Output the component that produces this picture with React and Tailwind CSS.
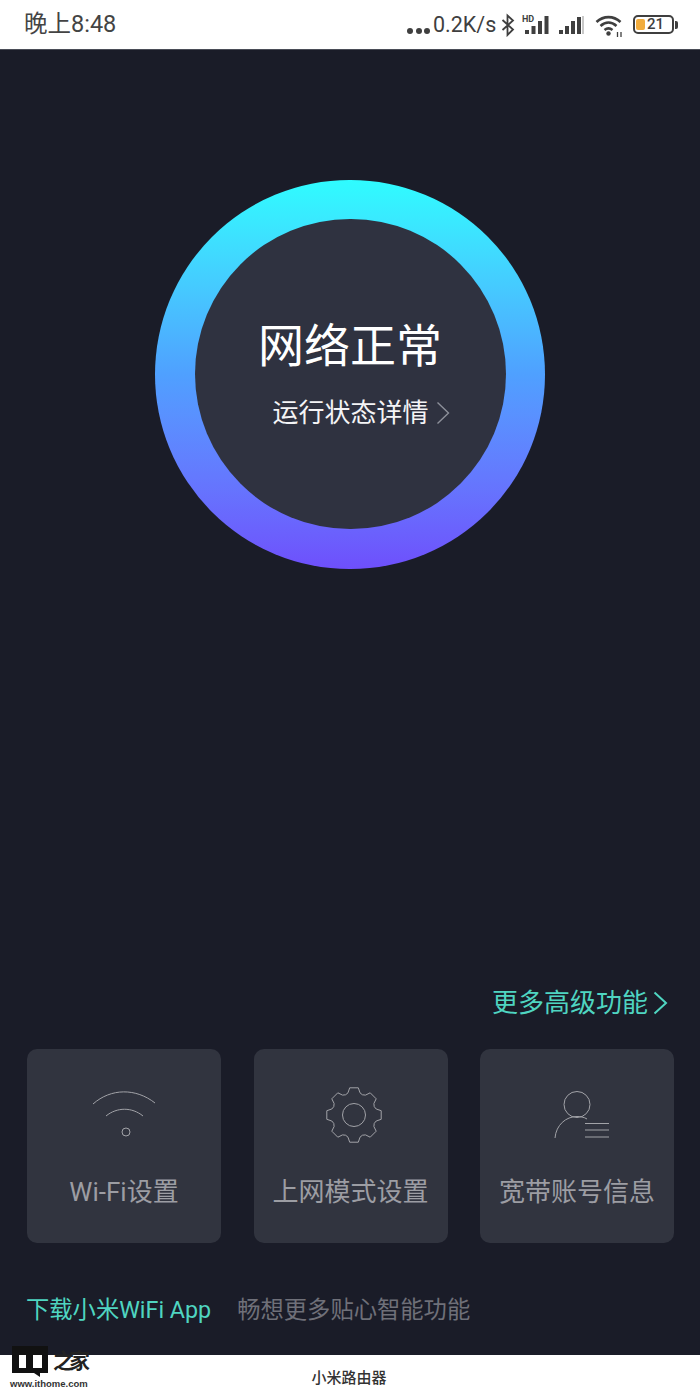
import React from 'react';

const CJK = 'font-["Roboto","Noto_Sans_CJK_SC",sans-serif]';

const StatusIcons = () => (
  <div className="flex items-center text-[#3f3f3f]">
    <span className="flex items-center justify-between w-[23px] mr-[3px] mt-[12px]">
      <i className="w-[6px] h-[6px] rounded-full bg-[#3f3f3f]" />
      <i className="w-[6px] h-[6px] rounded-full bg-[#3f3f3f]" />
      <i className="w-[6px] h-[6px] rounded-full bg-[#3f3f3f]" />
    </span>
    <span className="w-[63px] text-[21.5px] leading-none">0.2K/s</span>
    {/* bluetooth */}
    <svg width="14" height="24" viewBox="0 0 14 24" className="ml-[5px]" fill="none" stroke="#3f3f3f" strokeWidth="1.8">
      <path d="M1.5 7 L12 16.5 L6.5 22 V2.5 L12 7.5 L1.5 17" />
    </svg>
    {/* HD signal */}
    <svg width="28" height="24" viewBox="0 0 28 24" className="ml-[7px]">
      <text x="0" y="8.5" fontSize="9" fontWeight="700" fill="#3f3f3f" fontFamily="Roboto, sans-serif">HD</text>
      <rect x="3" y="17" width="4" height="4" fill="#3f3f3f" />
      <rect x="9.5" y="13" width="4" height="8" fill="#3f3f3f" />
      <rect x="16" y="8" width="4" height="13" fill="#3f3f3f" />
      <rect x="22.5" y="3" width="4" height="18" fill="#3f3f3f" />
    </svg>
    {/* second signal */}
    <svg width="26" height="24" viewBox="0 0 26 24" className="ml-[9px]">
      <rect x="0" y="17" width="4" height="4" fill="#3f3f3f" />
      <rect x="6" y="13" width="4" height="8" fill="#3f3f3f" />
      <rect x="12" y="8" width="4" height="13" fill="#3f3f3f" />
      <rect x="18" y="4" width="4" height="17" fill="#3f3f3f" />
      <rect x="23" y="3" width="2" height="18" fill="#c8c8c8" />
    </svg>
    {/* wifi */}
    <svg width="30" height="24" viewBox="0 0 30 24" className="ml-[10px]" fill="none" stroke="#3f3f3f" strokeWidth="2.6">
      <path d="M1.5 9 C8.5 2.5 18.5 2.5 25.5 9" />
      <path d="M5.5 13 C10.5 8.5 16.5 8.5 21.5 13" />
      <path d="M9.5 17 C12 15 15 15 17.5 17" />
      <circle cx="13.5" cy="20.5" r="2.2" fill="#3f3f3f" stroke="none" />
      <path d="M22.5 19 V24 M26 19 V24" strokeWidth="1.3" />
    </svg>
    {/* battery */}
    <div className="ml-[8px] flex items-center">
      <div className="w-[41px] h-[19px] rounded-[5px] border-2 border-[#3f3f3f] flex items-center pl-[1px]">
        <i className="w-[9px] h-[11px] rounded-[2px] bg-[#f2ac3c]" />
        <span className="ml-[2px] text-[15px] leading-none font-medium">21</span>
      </div>
      <i className="ml-[1px] w-[3px] h-[8px] rounded-r-[2px] bg-[#3f3f3f]" />
    </div>
  </div>
);

const WifiLine = () => (
  <svg width="66" height="52" viewBox="0 0 66 52" fill="none" stroke="#a2a3a8" strokeWidth="1">
    <path d="M2 15 C20 -1 45 -1 64 14" />
    <path d="M15 27 C26 18 41 18 52 27" />
    <circle cx="35" cy="43" r="4" />
  </svg>
);

// 8 teeth, flat tips, rounded valleys
const gearPath = () => {
  const pt = (r, deg) => {
    const a = ((deg - 90) * Math.PI) / 180;
    return `${(28 + r * Math.cos(a)).toFixed(1)} ${(28 + r * Math.sin(a)).toFixed(1)}`;
  };
  let d = '';
  for (let i = 0; i < 8; i++) {
    const a = i * 45;
    d += `${i === 0 ? 'M' : 'L'}${pt(27.5, a - 9)} L${pt(27.5, a + 9)} L${pt(23, a + 15)} Q${pt(21, a + 22.5)} ${pt(23, a + 30)} `;
  }
  return d + 'Z';
};

const GearLine = () => (
  <svg width="56" height="56" viewBox="0 0 56 56" fill="none" stroke="#a2a3a8" strokeWidth="1" className="ml-[6px]">
    <path d={gearPath()} strokeLinejoin="round" />
    <circle cx="28" cy="28" r="11.5" />
  </svg>
);

const UserLine = () => (
  <svg width="56" height="50" viewBox="0 0 56 50" fill="none" stroke="#a2a3a8" strokeWidth="1" className="ml-[10px]">
    <circle cx="23" cy="14.5" r="13" />
    <path d="M1 48 C2 35 12 26.5 23 26.5 C26 26.5 30 27 33 29" />
    <path d="M31 33.5 H55 M31 40 H55 M31 47 H55" />
  </svg>
);

const cards = [
  { label: 'Wi-Fi设置', icon: <WifiLine /> },
  { label: '上网模式设置', icon: <GearLine /> },
  { label: '宽带账号信息', icon: <UserLine /> },
];

const App = () => {
  return (
    <div className={`relative w-[700px] h-[1400px] bg-white overflow-hidden ${CJK}`}>
      {/* Status bar */}
      <div className="h-[49px] flex items-center justify-between pl-[24px] pr-[22px] bg-white">
        <span className="text-[23.5px] leading-none text-[#444]">晚上8:48</span>
        <StatusIcons />
      </div>

      {/* Main */}
      <div className="h-[1306px] bg-[#1a1c28] border-t border-[#4a4d57] flex flex-col">
        {/* Status ring */}
        <div className="mt-[130px] self-center w-[390px] h-[389px] rounded-full bg-gradient-to-b from-[#2ffcff] via-[#4fa0ff] to-[#6e4ffc] flex items-center justify-center">
          <div className="w-[311px] h-[310px] mb-[1px] rounded-full bg-[#2f3240] flex flex-col items-center">
            <span className="mt-[97px] text-[46px] leading-[60px] text-white">网络正常</span>
            <span className="mt-[19px] ml-[22px] flex items-center text-[26px] leading-[36px] text-[#f4f4f6]">
              运行状态详情
              <svg width="14" height="24" viewBox="0 0 14 24" fill="none" stroke="#8d909a" strokeWidth="1.4" className="ml-[7px]">
                <path d="M1.5 1.5 L12.5 12 L1.5 22.5" />
              </svg>
            </span>
          </div>
        </div>

        {/* Advanced link */}
        <div className="mt-auto pr-[32px] flex justify-end items-center">
          <span className="text-[26px] leading-[36px] text-[#4fd5c1]">更多高级功能</span>
          <svg width="15" height="24" viewBox="0 0 15 24" fill="none" stroke="#4fd5c1" strokeWidth="2" className="ml-[5px]">
            <path d="M1.5 1.5 L13 12 L1.5 22.5" />
          </svg>
        </div>

        {/* Cards */}
        <div className="mt-[28px] pl-[27px] pr-[26px] flex justify-between">
          {cards.map(card => (
            <div key={card.label} className="w-[194px] h-[194px] rounded-[10px] bg-[#31343f] flex flex-col items-center">
              <div className="h-[56px] mt-[38px] flex items-center justify-center">{card.icon}</div>
              <span className="mt-[31px] text-[26px] leading-[36px] text-[#9c9da3]">{card.label}</span>
            </div>
          ))}
        </div>

        {/* Download hint */}
        <div className="mt-[50px] mb-[28px] pl-[26px] flex items-center text-[23.3px] leading-[34px]">
          <span className="text-[#4fd5c1]">下载小米WiFi App</span>
          <span className="ml-[26px] text-[#6f7079]">畅想更多贴心智能功能</span>
        </div>
      </div>

      {/* Bottom title */}
      <div className="h-[45px] flex items-center justify-center bg-white">
        <span className="text-[15px] leading-none text-[#333] font-medium mt-[1px] -ml-[2px]">小米路由器</span>
      </div>

      {/* Watermark */}
      <div className="absolute left-[10px] top-[1346px] flex flex-col">
        <div className="flex items-start">
          <div className="relative ml-[2px] w-[36px] h-[27px] bg-[#111] flex items-end pb-[5px] pl-[7px] gap-[7px]">
            <i className="w-[7px] h-[13px] bg-white" />
            <i className="w-[9px] h-[13px] bg-white" />
            <i className="absolute left-[22px] top-[27px] w-0 h-0 border-t-[4px] border-t-[#111] border-l-[6px] border-l-transparent" />
          </div>
          <span className="ml-[5px] mt-[3px] text-[21px] leading-[24px] font-bold tracking-[-5px] text-[#222]">之家</span>
        </div>
        <span className="mt-[6px] text-[9.5px] leading-[10px] font-bold text-[#333] font-['Liberation_Sans',sans-serif]">www.ithome.com</span>
      </div>
    </div>
  );
};

export default App;
